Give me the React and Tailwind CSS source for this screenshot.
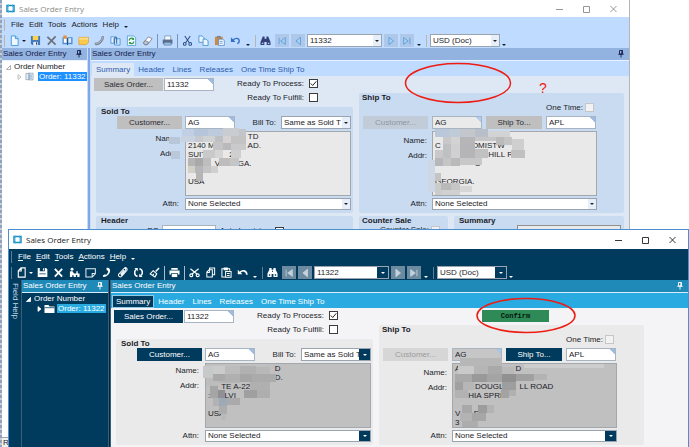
import React, { useId, useState } from 'react';
import clsx from 'clsx';

const LIGHT = {
    title: 'text-[#8a8a8a]',
    chrome: 'bg-[#bfdbff] text-[#1c1c28]',
    header: 'bg-[#92b2e0] text-[#16204a] border-[#e8f1ff]',
    splitter: 'bg-[#7fa8e4] border-[#c9dcf7]',
    tree: 'bg-white text-[#1c1c28]',
    treeItem: 'bg-[#1e90ff] text-white',
    tabs: 'bg-[#bfdbff]',
    tab: 'text-[#2f5bab]',
    activeTab: 'bg-[#dfe9f6] text-[#2f5bab]',
    form: 'bg-[#dee8f5]',
    group: 'bg-[#c9dbf1]',
    button: 'bg-[#bfbfbf] text-[#2b2b33]',
    disabled: 'bg-[#c2ccd8] text-[#8b95a3]',
    memo: 'bg-[#e9e9e9]',
    readOnly: 'bg-[linear-gradient(225deg,#b4cdee_4px,#eaeaea_4px)]',
    arrow: 'w-2 bg-[#e6eefa] text-[#222]',
    nav: 'bg-[#aec8ea]',
    grip: 'bg-[#b9b5ae]',
};

const DARK = {
    title: 'text-[#222]',
    chrome: 'bg-[#003a5d] text-white',
    header: 'bg-[#1f89b8] text-white border-[#d7eefa]',
    splitter: 'bg-[#00263f] border-[#3c5f78]',
    tree: 'bg-[#003a5d] text-white',
    treeItem: 'bg-[#29abe2] text-white',
    tabs: 'bg-[#29abe2]',
    tab: 'text-white',
    activeTab: 'bg-[#003a5d] text-white border border-[#8fc9e6]',
    form: 'bg-[#f4f4f6]',
    group: 'bg-[#eaeaea]',
    button: 'bg-[#003a5d] text-white',
    disabled: 'bg-[#d6d6d6] text-[#9c9c9c]',
    memo: 'bg-[#c0c0c0]',
    readOnly: 'bg-[linear-gradient(225deg,#a9c4e6_4px,#c6c6c6_4px)]',
    arrow: 'w-[11px] bg-[#003a5d] text-white',
    nav: 'bg-[#6d8ba0]',
    grip: 'bg-[#5d7f96]',
};

/* Toolbar drawings, 12x12 */
const lightIcons = {
    new: (
        <g fill="#eef7ff" stroke="#3f97d8">
            <path d="M2.5 1h4.5l3 3v7.5h-7.5z" />
            <path d="M7 1v3h3" fill="#9fd0f5" />
        </g>
    ),
    save: (
        <g>
            <path d="M1 1h10v10H2.5L1 9.5z" fill="#3f78bb" />
            <path d="M3 1h6v4.5H3z" fill="#ffd24d" />
            <path d="M3.5 7.5h5V11h-5z" fill="#e5edf6" />
            <path d="M6.5 8h1.2v2.5H6.5z" fill="#345" />
        </g>
    ),
    del: <path d="M1.5 2l9 8.5M10.5 1.5L2 10.5" stroke="#6c7078" strokeWidth="1.8" fill="none" />,
    note: (
        <g>
            <path d="M.5 2.5h5l.5.8.5-.8h5V10H7l-1 1-1-1H.5z" fill="#4f8fce" />
            <path d="M2 3.5h3v5H2z" fill="#fff" />
            <path d="M7 3.5h3v5H7z" fill="#d9ebfb" />
            <path d="M1.5.5h3.5v3.5H1.5z" fill="#e8902e" />
            <path d="M6 3.3V11" stroke="#274c7d" />
        </g>
    ),
    memo: (
        <g>
            <path d="M1 2.5h10.5V8L9 10.5H1z" fill="#fbc94c" stroke="#d9962a" strokeWidth=".7" />
            <path d="M1.4 3h9.7v2H1.4z" fill="#ffe08a" />
        </g>
    ),
    phone: (
        <g fill="none" strokeLinecap="round">
            <path d="M2 9.5C5 10.5 9.5 6 9.5 2.5" stroke="#7a8494" strokeWidth="2.8" />
            <path d="M2 9.2C5 10 9 6 9.3 2.8" stroke="#c5cbd5" strokeWidth=".9" />
        </g>
    ),
    clip: (
        <g>
            <path d="M1 2h6v7H1z" fill="#e6f2fd" stroke="#3b86c8" strokeWidth=".8" />
            <path d="M5 4h6v7H5z" fill="#cfe6fb" stroke="#3b86c8" strokeWidth=".8" />
            <path d="M4.5 9V4a1.4 1.4 0 0 1 2.8 0v5.5" fill="none" stroke="#1f5c9c" />
        </g>
    ),
    refresh: (
        <g>
            <path d="M1.5 1h7l2 2v8.5h-9z" fill="#eff7ff" stroke="#4e9bd8" strokeWidth=".9" />
            <path d="M3.5 6A2.5 2.5 0 0 1 8 4.5M8.5 7A2.5 2.5 0 0 1 4 8.4" fill="none" stroke="#2f9a3c" strokeWidth="1.4" />
            <path d="M8.8 2.8v2.6H6.2zM3.3 10V7.5h2.6z" fill="#2f9a3c" />
        </g>
    ),
    clear: (
        <g stroke="#66707e" strokeWidth=".8">
            <path d="M1.5 8.5l5.5-6.5 4 2-5 6.5H3z" fill="#fff" />
            <path d="M1.5 8.5l2-2.5 4 2-2 2.5H3z" fill="#b9c4d2" />
        </g>
    ),
    print: (
        <g>
            <path d="M3 1h6.5v5H3z" fill="#f4f8fd" stroke="#66809f" strokeWidth=".7" />
            <path d="M.8 5h10.6v4.5H.8z" fill="#5b6f8c" />
            <path d="M2.2 8h7.8v3H2.2z" fill="#97c1ea" stroke="#4f6582" strokeWidth=".6" />
        </g>
    ),
    cut: (
        <g fill="none" stroke="#2b4d84" strokeWidth="1.1">
            <path d="M3 1l5 7.5M9 1L4 8.5" />
            <circle cx="3" cy="9.7" r="1.5" />
            <circle cx="9" cy="9.7" r="1.5" />
        </g>
    ),
    copy: (
        <g fill="#e9f4ff" stroke="#3f8fd2" strokeWidth=".9">
            <path d="M1 1h3.5L6.5 3v5H1z" />
            <path d="M5.5 4.5h3.5l2 2v5H5.5z" />
        </g>
    ),
    paste: (
        <g>
            <path d="M1 2h8.5v9H1z" fill="#c98a4a" />
            <path d="M3 1h4.5v2H3z" fill="#7d8897" />
            <path d="M5 4.5h4.5L11.3 6v5.5H5z" fill="#eaf4ff" stroke="#3f7dbb" strokeWidth=".7" />
            <path d="M6.3 7h3M6.3 9h3" stroke="#5b8ec0" strokeWidth=".8" />
        </g>
    ),
    undo: (
        <g fill="none" stroke="#2f6fc4" strokeWidth="1.5">
            <path d="M3 6.5C5 2.5 10.5 3 10 7c-.1 1.2-.8 2-2 2.5" />
            <path d="M1 2.5v5h5z" fill="#2f6fc4" stroke="none" />
        </g>
    ),
    find: (
        <g fill="#34427a">
            <path d="M3 1.5h2v2.5h2V1.5h2L11.5 8v3H7.3V7.5H4.7V11H.5V8z" />
            <path d="M2 8.5h1.6v1.4H2zM8.6 8.5h1.6v1.4H8.6z" fill="#bcd2f2" />
        </g>
    ),
};

const darkIcons = {
    new: <path d="M2.5 11V4l3-3H10v10z M2.5 4.3h3.2V1" fill="none" stroke="#fff" strokeWidth="1.2" />,
    save: (
        <g>
            <path d="M.8 1h9l1.5 1.5V11H.8z" fill="#fff" />
            <path d="M3 1h5.5v3.5H3zM2.5 7h7v1H2.5z" fill="#003a5d" />
            <path d="M6.5 1.5h1.2v2.3H6.5z" fill="#fff" />
        </g>
    ),
    del: <path d="M2 2l8 8.5M10 2l-8 8.5" stroke="#fff" strokeWidth="2" fill="none" />,
    note: (
        <g fill="#fff">
            <circle cx="3.3" cy="2.5" r="1.6" />
            <path d="M1 11V5l2.5-.7L5.5 7H8V4.5h1.5V7h2V11H9V8.8H7.5V11H5V9H3.5v2z" />
        </g>
    ),
    memo: <path d="M1 2h10.3v5.5L8 10.8H1zM11 7.2H7.8v3.4" fill="none" stroke="#e6eef4" strokeWidth="1.1" />,
    phone: <path d="M6 1c3.5-.5 4.8 2.4 3.4 5.2C8 9 5.5 10.8 2.5 11L2 9.3 4.3 8l1.2.6C7 7.5 8 5.7 7.8 4L6.2 3.5z" fill="#fff" />,
    clip: <path d="M4.5 9.2l4.8-5.7a1.3 1.3 0 0 0-2-1.6L2 7.7a2 2 0 0 0 3 2.6l5.7-6.5A2 2 0 0 0 8 1M3.8 8l4-4.6" fill="none" stroke="#fff" strokeWidth="1.1" />,
    refresh: (
        <g fill="none" stroke="#fff" strokeWidth="1.7">
            <path d="M5 10.2C1.3 9.5 1 4.5 3.2 2.8M7 1.8C10.7 2.5 11 7.5 8.8 9.2" />
            <path d="M1.5 1.2h3.7v3.5zM10.5 10.8H6.8V7.3z" fill="#fff" stroke="none" />
        </g>
    ),
    clear: (
        <g fill="none" stroke="#fff">
            <path d="M11 1L7.3 5" strokeWidth="1.6" />
            <path d="M4.5 4l4 3.5-2 3.3L1.3 7.5zM4.2 9l1-1.7" strokeWidth="1.2" />
        </g>
    ),
    print: (
        <g fill="#fff">
            <path d="M2.5 1h7v2h-7zM.5 3.8h11v4.5H9.8V6.8H2.2v1.5H.5z" />
            <path d="M3 7.6h6V11H3z" />
        </g>
    ),
    cut: (
        <g fill="none" stroke="#fff" strokeWidth="1.3">
            <path d="M1.5 2l7.5 6M10.5 2L3 8" />
            <circle cx="2.5" cy="9" r="1.6" />
            <circle cx="9.5" cy="9" r="1.6" />
        </g>
    ),
    copy: <path d="M5 3V1h5.5v7.5H8M2 11V5.5L4.5 3H8v8zM2 6h2.8V3" fill="none" stroke="#fff" strokeWidth="1.1" />,
    paste: (
        <g fill="none" stroke="#fff" strokeWidth="1.1">
            <path d="M4.5 11H1V2h8.5v2M3.5 1h3.5v2H3.5z" />
            <path d="M5 5h6v6.3H5zM6.5 7.2h3M6.5 9.2h3" />
        </g>
    ),
    undo: (
        <g fill="none" stroke="#fff" strokeWidth="1.7">
            <path d="M3 6.5C5 2.8 10.5 3.5 10.8 8.5" />
            <path d="M.8 3v5h5z" fill="#fff" stroke="none" />
        </g>
    ),
    find: (
        <g fill="#fff">
            <path d="M2.5 1h2.5v2h2V1h2.5v2l2 4v4H7V7.5H5V11H.5V7l2-4z" />
            <path d="M2 8h1.5v1.5H2zM8.5 8H10v1.5H8.5zM5.5 4h1v1.5h-1z" fill="#003a5d" />
        </g>
    ),
};

const tools = ['save', 'del', 'note', 'memo', 'phone', 'clip', 'refresh', 'clear', '|', 'print', '|', 'cut', 'copy', 'paste', 'undo'];

const navPaths = {
    first: 'M2.5 2v8M10 2L4.5 6l5.5 4z',
    prev: 'M9 1.5L3.5 6 9 10.5z',
    next: 'M3.5 1.5L9 6l-5.5 4.5z',
    last: 'M9.5 2v8M2 2l5.5 4L2 10z',
};

const ToolButton = ({ name, dark }) => (
    <button type="button" aria-label={name} className="flex w-4 shrink-0 items-center justify-center">
        <svg viewBox="0 0 12 12" className="size-[11px]">{(dark ? darkIcons : lightIcons)[name]}</svg>
    </button>
);

const NavButton = ({ name, theme, dark }) => (
    <button type="button" aria-label={name} className={clsx('flex h-[13px] w-[14px] shrink-0 items-center justify-center', theme.nav)}>
        <svg viewBox="0 0 12 12" className="size-[10px]">
            <path d={navPaths[name]} fill={dark ? '#c4d2dc' : '#a5d0f6'} stroke={dark ? '#c4d2dc' : '#5a9ad8'} />
        </svg>
    </button>
);

const Caret = ({ className }) => (
    <svg viewBox="0 0 4 2" className={clsx('h-0.5 w-1 shrink-0', className)}>
        <path d="M0 0h4L2 2z" fill="currentColor" />
    </svg>
);

const Pin = () => (
    <svg viewBox="0 0 6 8" className="h-2 w-1.5">
        <path d="M1.5.5h3v3.5h-3zM.3 4.3h5.4M3 4.5V7.5M3.8.5V4" fill="none" stroke="currentColor" strokeWidth=".9" />
    </svg>
);

const Grip = ({ theme }) => <span className={clsx('mx-px h-3 w-px shrink-0', theme.grip)} />;

const Select = ({ theme, value, className, ...props }) => (
    <div className={clsx('relative border border-[#9aa4b0] bg-white', className)}>
        <select {...props} defaultValue={value} className="block size-full appearance-none overflow-hidden bg-transparent pl-0.5 text-[#1c1c28] outline-none">
            <option>{value}</option>
        </select>
        <span className={clsx('pointer-events-none absolute inset-y-0 right-0 flex items-center justify-center', theme.arrow)}>
            <Caret />
        </span>
    </div>
);

const FormButton = ({ theme, children, disabled, className }) => (
    <button type="button" disabled={disabled} className={clsx('h-[13px] shrink-0', disabled ? theme.disabled : theme.button, className)}>
        {children}
    </button>
);

const Field = ({ className, value, label }) => (
    <input
        aria-label={label}
        defaultValue={value}
        className={clsx('h-[13px] w-[50px] shrink-0 border border-[#a9b4c2] pl-0.5 text-[#1c1c28] outline-none', className || 'bg-[linear-gradient(225deg,#9fbce2_4px,#ffffff_4px)]')}
    />
);

const Check = ({ id, children, checked, faded }) => {
    const [on, setOn] = useState(Boolean(checked));
    return (
        <div className="flex items-center justify-end">
            <label htmlFor={id}>{children}</label>
            <span className={clsx('relative size-[9px] border', faded ? 'ml-0.5 border-[#c6c6c6] bg-[#f2f2f2]' : 'ml-[5px] border-[#3c3c3c] bg-white')}>
                <input id={id} type="checkbox" checked={on} onChange={() => setOn(!on)} className="absolute inset-0 size-full appearance-none" />
                {on && (
                    <svg viewBox="0 0 7 7" className="pointer-events-none block size-[7px]">
                        <path d="M.8 3.5l1.9 2L6.3 1.3" fill="none" stroke="#222" />
                    </svg>
                )}
            </span>
        </div>
    );
};

const Memo = ({ id, theme, lines }) => (
    <textarea
        id={id}
        readOnly
        value={lines.join('\n')}
        className={clsx('h-[65px] min-w-0 flex-1 resize-none overflow-hidden border border-[#a3a8ae] px-0.5 leading-[9px] whitespace-pre text-[#1c1c28] outline-none', theme.memo)}
    />
);

const SalesForm = ({ theme, order, confirm, details, sold, ship }) => {
    const id = useId();

    return (
        <div className={clsx('flex-1 pt-px pr-[5px] pl-[3px]', theme.form)}>
            <div className="flex max-w-[530px] gap-1.5 text-[#1c1c28]">
                {/* Order + Sold To */}
                <div className="flex min-w-0 flex-[259] flex-col">
                    <div className="flex h-[30px] gap-px pt-px">
                        <FormButton theme={theme} className="w-[69px]">Sales Order...</FormButton>
                        <Field label="Sales Order" value={order} />
                        <div className="flex flex-1 flex-col gap-[5px] pt-px pr-[35px] leading-[9px]">
                            <Check id={`${id}-process`} checked>Ready To Process:</Check>
                            <Check id={`${id}-fulfill`}>Ready To Fulfill:</Check>
                        </div>
                    </div>

                    <section className={clsx('ml-0.5 rounded-xs pr-0.5 pb-[3px]', theme.group)}>
                        <h3 className="pl-[5px] leading-[9px] font-bold">Sold To</h3>
                        <div className="flex gap-[3px] pl-[21px]">
                            <FormButton theme={theme} className="w-[65px]">Customer...</FormButton>
                            <Field label="Customer" value="AG" />
                            <label htmlFor={`${id}-bill`} className="flex-1 pr-0.5 text-right leading-[13px]">Bill To:</label>
                            <Select id={`${id}-bill`} theme={theme} value="Same as Sold T" className="h-[13px] w-[70px]" />
                        </div>
                        <div className="mt-0.5 flex">
                            <div className="w-[89px] space-y-1.5 pt-[3px] pr-1.5 text-right leading-[9px]">
                                <label htmlFor={`${id}-sold`} className="block">Name:</label>
                                <label htmlFor={`${id}-sold`} className="block">Addr:</label>
                            </div>
                            <Memo id={`${id}-sold`} theme={theme} lines={sold} />
                        </div>
                        <div className="mt-0.5 flex">
                            <label htmlFor={`${id}-sattn`} className="w-[89px] pr-1.5 text-right leading-3">Attn:</label>
                            <Select id={`${id}-sattn`} theme={theme} value="None Selected" className="h-3 flex-1" />
                        </div>
                    </section>

                    {details && (
                        <section className={clsx('mt-[3px] ml-0.5 rounded-xs pr-0.5 pb-2', theme.group)}>
                            <h3 className="pl-[5px] leading-[9px] font-bold">Header</h3>
                            <div className="flex items-center">
                                <label htmlFor={`${id}-po`} className="w-[66px] pr-px text-right">PO:</label>
                                <input id={`${id}-po`} className="h-3 w-[54px] border border-[#a9b4c2] bg-white" />
                                <div className="w-[68px]">
                                    <Check id={`${id}-auto`}>Auto Invoicing</Check>
                                </div>
                            </div>
                        </section>
                    )}
                </div>

                {/* Ship To */}
                <div className="flex min-w-0 flex-[265] flex-col">
                    <div className="h-4 pt-px pl-[103px]">
                        {confirm && (
                            <button type="button" className="block h-3 w-[67px] bg-[#2e8b57] font-['Liberation_Mono',monospace] text-[7px] leading-3 font-bold text-[#06150c]">
                                Confirm
                            </button>
                        )}
                    </div>

                    <section className={clsx('rounded-xs pb-[3px]', theme.group)}>
                        <h3 className="pl-[3px] leading-[9px] font-bold">Ship To</h3>
                        <div className="pt-px pr-[30px] pb-1 leading-[9px]">
                            <Check id={`${id}-once`} faded>One Time:</Check>
                        </div>
                        <div className="flex gap-1 pr-[27px] pl-1">
                            <FormButton theme={theme} disabled className="w-[65px]">Customer...</FormButton>
                            <Field label="Ship customer" value="AG" className={theme.readOnly} />
                            <FormButton theme={theme} className="w-14">Ship To...</FormButton>
                            <Field label="Ship To" value="APL" />
                        </div>
                        <div className="mt-0.5 flex pr-[27px]">
                            <div className="w-[73px] space-y-1.5 pt-[5px] pr-[5px] text-right leading-[9px]">
                                <label htmlFor={`${id}-ship`} className="block">Name:</label>
                                <label htmlFor={`${id}-ship`} className="block">Addr:</label>
                            </div>
                            <Memo id={`${id}-ship`} theme={theme} lines={ship} />
                        </div>
                        <div className="mt-0.5 flex pr-[27px]">
                            <label htmlFor={`${id}-hattn`} className="w-[73px] pr-[5px] text-right leading-3">Attn:</label>
                            <Select id={`${id}-hattn`} theme={theme} value="None Selected" className="h-3 flex-1" />
                        </div>
                    </section>

                    {details && (
                        <div className="mt-[3px] flex gap-1.5">
                            <section className={clsx('w-[89px] rounded-xs pr-2', theme.group)}>
                                <h3 className="pl-[3px] leading-[9px] font-bold">Counter Sale</h3>
                                <Check id={`${id}-counter`} faded>Counter Sale:</Check>
                            </section>
                            <section className={clsx('flex-1 rounded-xs pr-[3px]', theme.group)}>
                                <h3 className="pl-[5px] leading-[9px] font-bold">Summary</h3>
                                <input aria-label="Total" readOnly value="22,335.00" className="ml-auto block h-3 w-[104px] border border-[#8f8f8f] bg-[#e9e9e9] pr-0.5 text-right font-bold" />
                            </section>
                        </div>
                    )}
                </div>
            </div>
        </div>
    );
};

const PanelHeader = ({ theme, children }) => (
    <div className={clsx('flex h-[13px] shrink-0 items-center justify-between border-b pr-[5px] pl-px', theme.header)}>
        <span>{children}</span>
        <Pin />
    </div>
);

const EntryWindow = ({ theme, dark, order, className, ...form }) => (
    <div className={clsx('absolute flex flex-col overflow-hidden', className)}>
        {/* Title bar */}
        <div className={clsx('flex shrink-0 items-center bg-white pl-1', dark ? 'h-[19px]' : 'h-[17px]', theme.title)}>
            <svg viewBox="0 0 9 9" className="mr-1 size-[9px]">
                <path d="M1 1.5h7v6H1z" fill="#fff" stroke="#1c8fc0" strokeWidth="1.5" />
                <path d="M2.5.5v8M6.5.5v8" stroke="#39b2e0" strokeWidth=".8" />
                <path d="M2.5 3h4v3h-4z" fill="#fff" />
            </svg>
            <span className="font-['Open_Sans',sans-serif]">Sales Order Entry</span>
            <div className="ml-auto flex gap-[19px] pr-[11px]">
                {['M0 4.5h7', 'M.5 1.5h6v6h-6z', 'M.5 1l6 6M6.5 1l-6 6'].map((d, i) => (
                    <button key={d} type="button" aria-label={['Minimize', 'Maximize', 'Close'][i]}>
                        <svg viewBox="0 0 8 8" className="size-2">
                            <path d={d} fill="none" stroke="currentColor" strokeWidth=".9" />
                        </svg>
                    </button>
                ))}
            </div>
        </div>

        {/* Menu and toolbar */}
        <div className={clsx('shrink-0', theme.chrome)}>
            <nav className="flex h-4 items-center gap-[5px] pl-px">
                <Grip theme={theme} />
                {['File', 'Edit', 'Tools', 'Actions', 'Help'].map((item) => (
                    <button key={item} type="button">
                        {dark ? <><u>{item[0]}</u>{item.slice(1)}</> : item}
                    </button>
                ))}
                <Caret className="mt-[3px]" />
            </nav>
            <div className="flex h-[15px] items-center pl-px">
                <Grip theme={theme} />
                <ToolButton name="new" dark={dark} />
                <Caret className="mr-px" />
                {tools.map((name, i) => (
                    name === '|'
                        ? <span key={i} className={clsx('mx-px h-3.5 w-0.5 shrink-0 border-r', dark ? 'border-[#a9bccb]' : 'border-[#7893bb]')} />
                        : <ToolButton key={name} name={name} dark={dark} />
                ))}
                <Caret className="mt-2 ml-[3px]" />
                <span className="ml-1 flex"><Grip theme={theme} /></span>
                <ToolButton name="find" dark={dark} />
                <div className="ml-0.5 flex gap-0.5">
                    <NavButton name="first" theme={theme} dark={dark} />
                    <NavButton name="prev" theme={theme} dark={dark} />
                    <Select theme={theme} value={order} aria-label="Order" className="h-[13px] w-[75px]" />
                    <NavButton name="next" theme={theme} dark={dark} />
                    <NavButton name="last" theme={theme} dark={dark} />
                </div>
                <Caret className="mt-2 ml-[3px]" />
                <span className="ml-1 flex"><Grip theme={theme} /></span>
                <Select theme={theme} value="USD (Doc)" aria-label="Currency" className="ml-0.5 h-[13px] w-[70px]" />
                <Caret className="mt-2 ml-0.5" />
            </div>
        </div>

        <div className="flex min-h-0 flex-1">
            {dark && (
                <div className="w-[13px] shrink-0 border-r border-[#3c5f78] bg-[#003a5d] pt-[3px] pl-px text-[#c9dbe7]">
                    <span className="block leading-[10px] [writing-mode:vertical-rl]">Field Help</span>
                </div>
            )}

            {/* Order tree */}
            <div className={clsx('flex shrink-0 flex-col', theme.tree, dark ? 'w-[86px]' : 'w-[85px]')}>
                <PanelHeader theme={theme}>Sales Order Entry</PanelHeader>
                <div className="flex items-center pt-px pl-1 leading-[10px]">
                    <svg viewBox="0 0 6 6" className="mr-[3px] size-[5px]">
                        <path d="M5.5.5v5h-5z" fill={dark ? '#fff' : 'none'} stroke={dark ? '#fff' : '#9a9a9a'} />
                    </svg>
                    Order Number
                </div>
                <div className="flex items-center pl-[15px] leading-[10px]">
                    <svg viewBox="0 0 6 8" className="h-1.5 w-[5px] shrink-0">
                        <path d="M1 .8L5 4 1 7.2z" fill={dark ? '#fff' : 'none'} stroke={dark ? '#fff' : '#a8a8a8'} />
                    </svg>
                    {dark ? (
                        <svg viewBox="0 0 10 8" className="mx-0.5 h-2 w-[11px] shrink-0">
                            <path d="M0 0h4l1 1.5h5V8H0z" fill="#fff" />
                            <path d="M0 2.7h10" stroke="#003a5d" strokeWidth=".8" />
                        </svg>
                    ) : (
                        <svg viewBox="0 0 10 9" className="mr-1 ml-[3px] size-[9px] shrink-0">
                            <path d="M1 1h4v7H1zM4 .8h5v7.5H4z" fill="#e4edf5" stroke="#8fa3b5" strokeWidth=".8" />
                            <path d="M5.3 3h2.5M5.3 4.7h2.5M5.3 6.4h2.5" stroke="#6d9ccb" strokeWidth=".7" />
                        </svg>
                    )}
                    <span className={clsx('px-px leading-[9px] whitespace-nowrap', theme.treeItem)}>Order: {order}</span>
                </div>
            </div>

            <div className={clsx('shrink-0 border-x', dark ? 'w-[3px]' : 'w-1', theme.splitter)} />

            {/* Entry form */}
            <div className="flex min-w-0 flex-1 flex-col">
                <PanelHeader theme={theme}>Sales Order Entry</PanelHeader>
                <div className={clsx('flex h-[15px] shrink-0 items-end pl-px', theme.tabs)}>
                    {['Summary', 'Header', 'Lines', 'Releases', 'One Time Ship To'].map((tab, i) => (
                        <button key={tab} type="button" className={clsx('h-[13px]', i === 0 ? theme.activeTab : theme.tab, i === 0 && dark ? 'px-[3px]' : 'px-1')}>
                            {tab}
                        </button>
                    ))}
                </div>
                <SalesForm theme={theme} order={order} {...form} />
            </div>
        </div>

        {!dark && <div className="h-2.5 shrink-0 border-t border-[#9aa4b0] bg-[#f0f0f0] pl-px leading-[10px] text-[#1c1c28]">R</div>}
    </div>
);

/* Mosaic tiles: x, y, width, height, fill */
const tiles = [
    [169, 137, 11, 7, '#b7c6d8'], [171, 151, 9, 8, '#b9c8da'],
    [182, 129, 12, 7, '#c0cfe3'], [194, 129, 14, 7, '#b6c5da'], [208, 129, 15, 7, '#bdcbdd'], [223, 128, 16, 8, '#c9ccd1'], [239, 129, 7, 8, '#c2c6cc'],
    [181, 136, 14, 6, '#c9d3df'], [195, 136, 8, 6, '#c6c9ce'], [203, 136, 12, 6, '#d0d1d3'], [215, 136, 8, 8, '#bdbfc3'], [223, 136, 8, 7, '#d4d3d1'], [231, 136, 15, 8, '#c3c3c4'],
    [213, 142, 10, 8, '#c4c4c6'], [223, 143, 8, 7, '#b9b9bb'], [231, 144, 15, 6, '#cacaca'],
    [203, 150, 12, 8, '#c9c9c9'], [215, 150, 8, 8, '#d5d5d5'], [231, 150, 10, 8, '#cfcfcf'],
    [188, 158, 7, 8, '#b5b5b6'], [195, 158, 8, 8, '#a9a9aa'], [203, 158, 8, 8, '#bebebe'], [219, 158, 11, 8, '#bdbdbd'], [230, 158, 9, 8, '#c5c5c5'],
    [188, 166, 7, 7, '#d3d0c8'], [195, 166, 8, 7, '#b6b6b8'], [203, 166, 8, 7, '#c4c4c4'], [211, 166, 7, 7, '#d0d0d0'],
    [196, 173, 7, 8, '#b5b5b5'],

    [435, 129, 14, 8, '#bac7da'], [449, 129, 11, 8, '#c0cbda'], [460, 129, 15, 8, '#c3c7cc'], [475, 129, 13, 8, '#b8bfc9'], [488, 131, 22, 6, '#d1d3d5'],
    [443, 137, 8, 7, '#c8c8ca'], [451, 137, 9, 7, '#d3d3d3'], [460, 137, 15, 7, '#b6b6b8'], [475, 137, 21, 4, '#c6c6c8'], [496, 137, 8, 8, '#bbbbbb'], [504, 137, 8, 8, '#c4c4c4'], [512, 139, 12, 11, '#cfcfcf'],
    [435, 150, 8, 8, '#c9c9cb'], [443, 144, 8, 14, '#bfc0c2'], [451, 144, 9, 14, '#d0d0d2'], [460, 144, 15, 14, '#b5b5b7'], [475, 149, 13, 9, '#c1c1c1'],
    [511, 150, 14, 8, '#c0c0c0'],
    [435, 158, 8, 8, '#b7b7b9'], [443, 158, 8, 8, '#c5c5c5'], [451, 158, 9, 8, '#bababa'], [460, 158, 22, 7, '#c8c8c8'],
    [428, 160, 7, 32, '#cdd8e5'],
    [435, 173, 6, 8, '#c4c4c6'], [441, 183, 10, 7, '#b9b9b9'], [451, 183, 9, 7, '#c6c6c6'], [435, 183, 6, 12, '#cbcbcb'], [441, 190, 19, 5, '#d0d0d0'], [460, 186, 12, 6, '#d6d6d6'],

    [203, 366, 10, 12, '#c6c8ca'], [213, 366, 12, 8, '#cbcbcb'], [225, 366, 15, 8, '#bcbcbc'], [240, 366, 16, 8, '#b1b1b1'], [256, 367, 14, 8, '#b8b8b8'],
    [206, 378, 12, 8, '#bcbcbc'], [213, 374, 12, 7, '#a9a9a9'], [218, 381, 22, 2, '#b6b6b6'], [225, 374, 15, 8, '#b0b0b0'], [240, 374, 12, 8, '#a6a6a6'], [252, 374, 24, 8, '#ababab'],
    [210, 386, 8, 12, '#a5a5a5'], [218, 390, 7, 8, '#8f8f94'], [250, 382, 20, 8, '#b0b0b0'], [244, 390, 13, 8, '#9f9f9f'], [257, 390, 13, 8, '#aeaeae'],
    [213, 398, 6, 8, '#b2b2b2'], [219, 398, 8, 8, '#9daab6'], [227, 398, 13, 7, '#aaaaaa'], [219, 406, 8, 8, '#adadad'], [221, 414, 5, 6, '#b9b9b9'],

    [460, 358, 42, 8, '#b7b7b8'], [458, 366, 16, 8, '#c9c9c9'], [474, 366, 14, 8, '#b5b5b5'], [488, 366, 14, 8, '#a9a9a9'], [502, 367, 12, 7, '#b9b9b9'], [524, 364, 80, 4, '#cdcdcd'],
    [455, 374, 17, 8, '#a9a9a9'], [472, 374, 15, 8, '#999999'], [487, 374, 15, 8, '#a4a4a4'], [502, 374, 14, 8, '#919191'], [516, 374, 18, 7, '#a0a0a0'], [534, 374, 13, 6, '#b3b3b3'],
    [455, 382, 8, 8, '#a0a0a0'], [463, 382, 11, 8, '#b6b6b6'], [502, 382, 14, 8, '#9e9e9e'], [455, 390, 13, 8, '#b2b2b2'], [501, 390, 8, 8, '#a3a3a3'], [509, 390, 7, 6, '#b0b0b0'],
    [462, 405, 10, 8, '#a8a8a8'], [478, 405, 9, 8, '#9c9c9c'], [487, 405, 7, 8, '#b3b3b3'], [460, 413, 12, 8, '#b3b3b3'], [472, 413, 14, 8, '#a6a6a6'], [462, 421, 16, 6, '#adadad'],
];

const App = () => (
    <main className="relative h-screen overflow-hidden bg-white font-['Liberation_Sans',Arial,sans-serif] text-[8px] leading-[10px]">
        <div className="h-full w-0.5 bg-[repeating-linear-gradient(180deg,#8fa3bd_0px,#8fa3bd_3px,#c9ced6_3px,#c9ced6_5px)]" />

        <EntryWindow
            theme={LIGHT}
            order="11332"
            details
            className="inset-y-0 right-[59px] left-0.5 border-r border-[#b5b5b5]"
            sold={[
                '                           TD',
                '2140 M               AD.',
                'SUITE        25',
                'EN       VI       GA.',
                '',
                'USA',
            ]}
            ship={[
                '',
                'C              OMISTW',
                '                        HILL R',
                '                  S',
                '',
                'GEORGIA.',
            ]}
        />

        <EntryWindow
            theme={DARK}
            dark
            confirm
            order="11322"
            className="top-[229px] right-0 bottom-0 left-2 border border-b-0 border-[#4a90d0]"
            sold={[
                '    AT                      D',
                '                              D.',
                '      TE A-225',
                ':  ELLVI',
                '',
                'USA',
            ]}
            ship={[
                'A                         D',
                '',
                '         DOUGLA     LL ROAD',
                '      HIA SPRIN',
                '',
                'V      D',
                '3',
            ]}
        />

        {/* Redaction tiles and red markup */}
        <svg className="pointer-events-none absolute top-0 left-0 h-[447px] w-[689px]" viewBox="0 0 689 447">
            {tiles.map(([x, y, w, h, fill], i) => (
                <rect key={i} x={x} y={y} width={w} height={h} fill={fill} />
            ))}
            <g fill="none" stroke="#ee1c12" strokeWidth="1.5">
                <ellipse cx="458" cy="83" rx="52.5" ry="19.5" />
                <ellipse cx="526" cy="315.5" rx="49" ry="17" />
            </g>
        </svg>
        <span className="absolute top-[81px] left-[539px] text-sm leading-[14px] text-[#ee1c12]">?</span>
    </main>
);

export default App;
